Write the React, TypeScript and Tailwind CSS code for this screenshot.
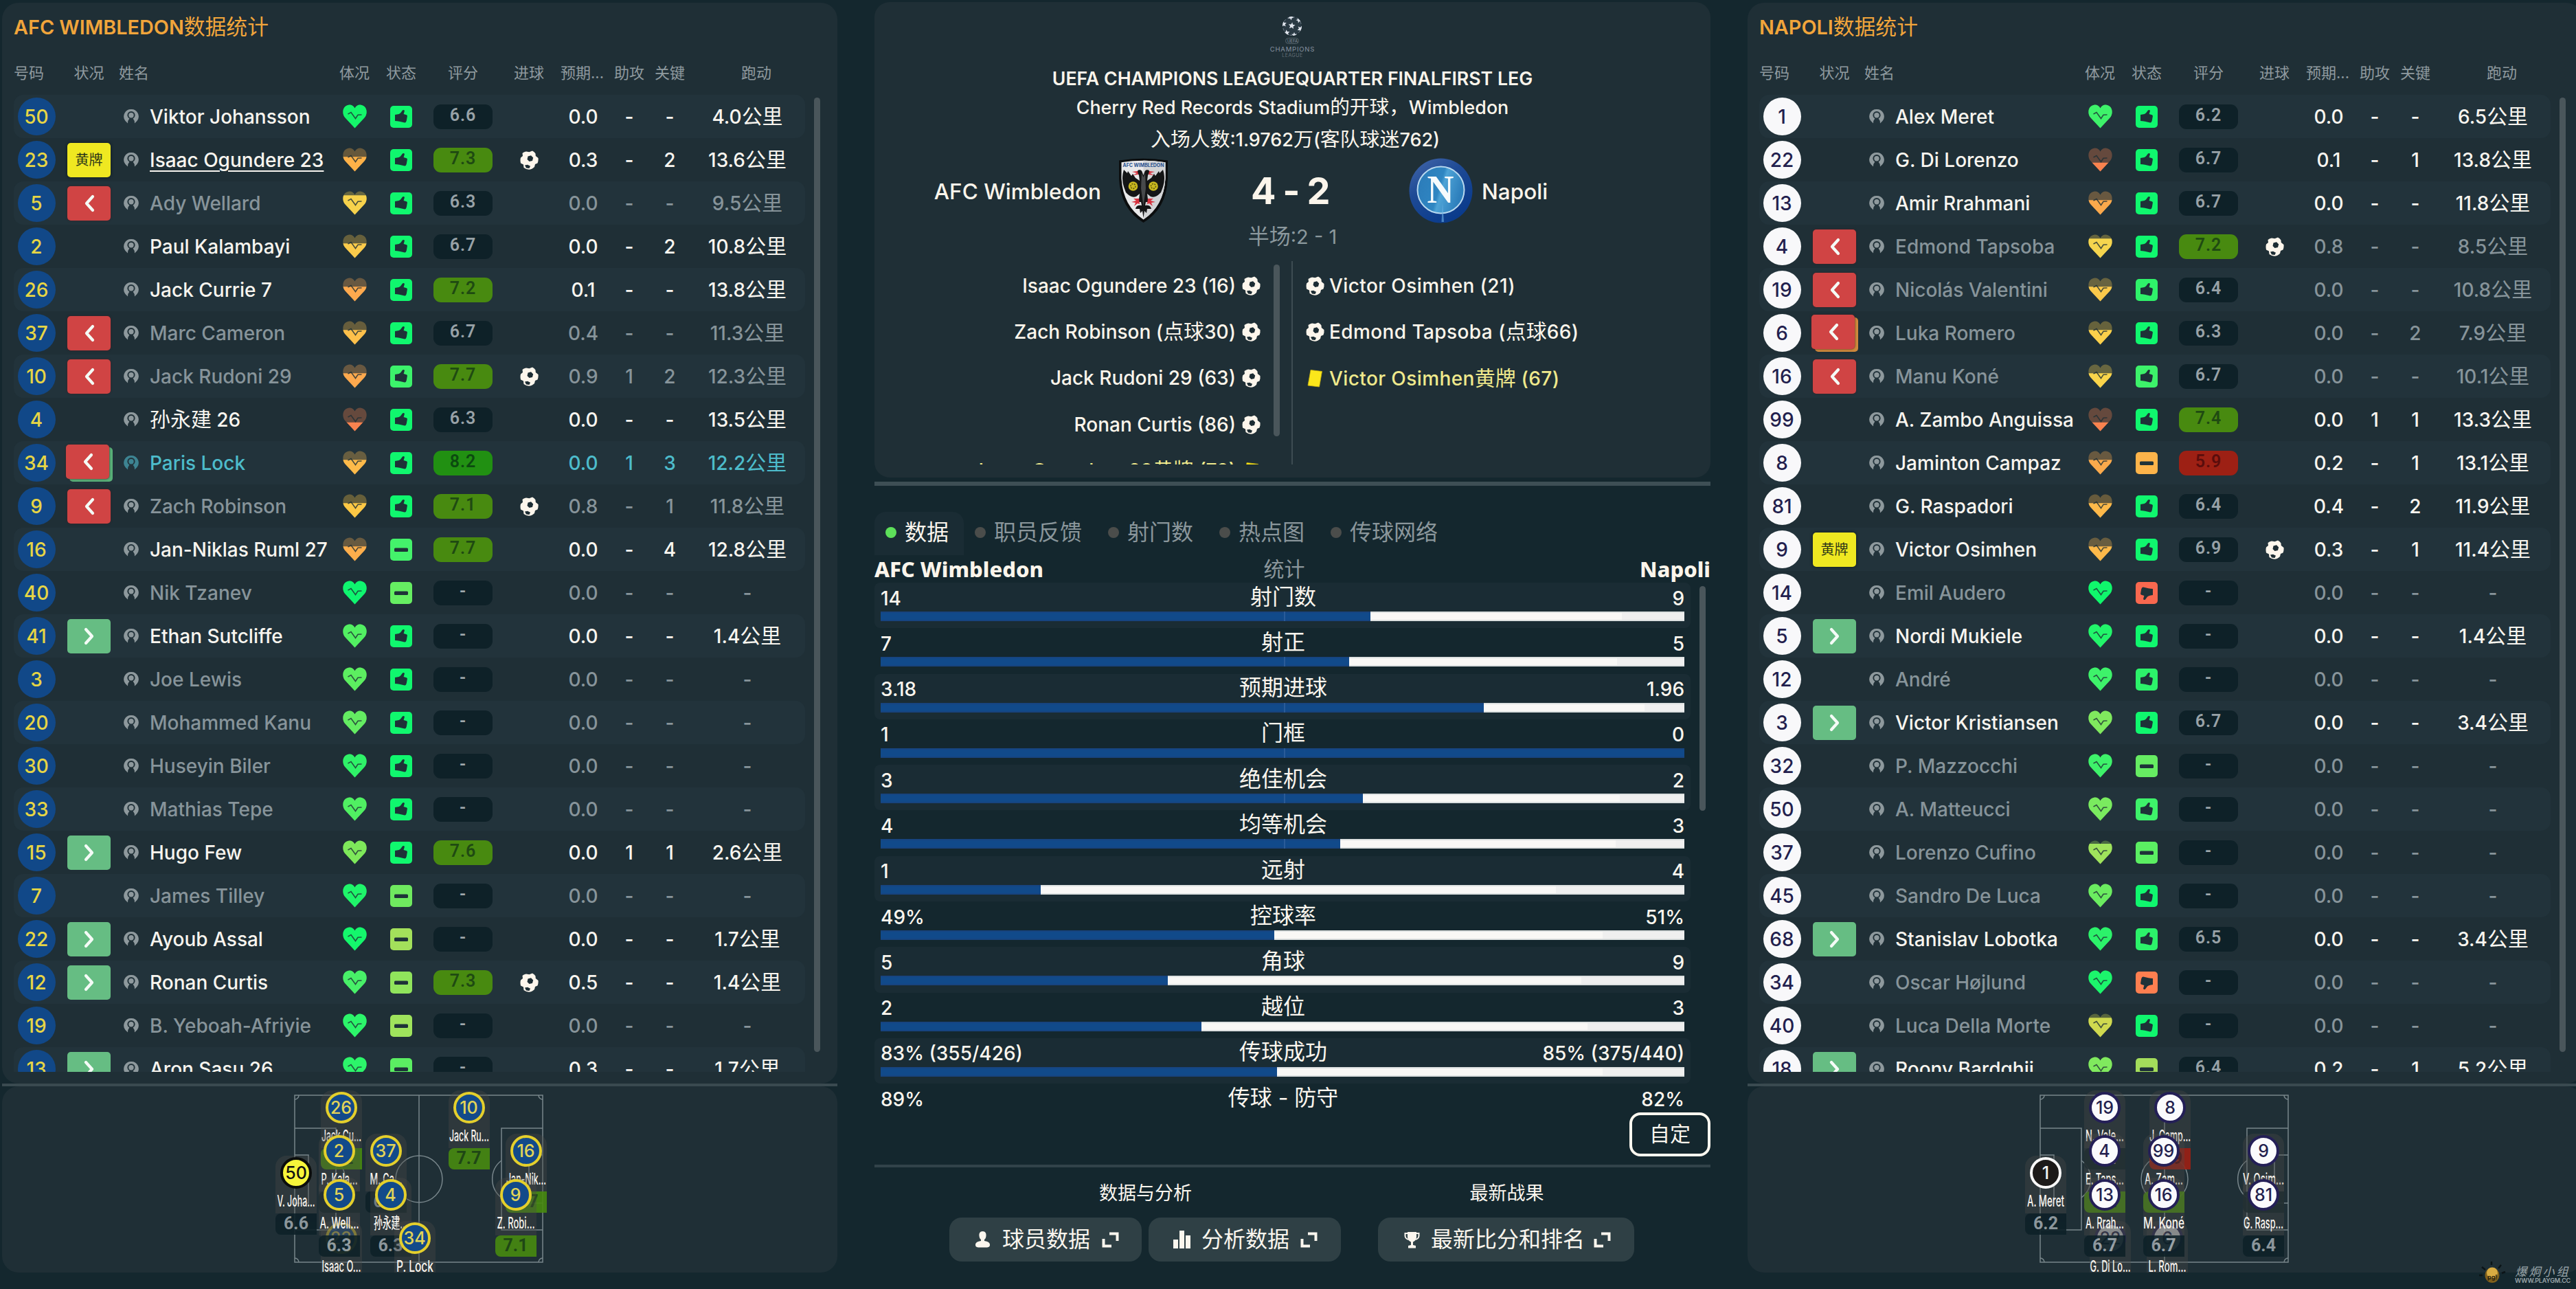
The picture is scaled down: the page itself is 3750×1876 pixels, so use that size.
import React from "react";

type Status = "card" | "out" | "in" | "outGreen" | "outOrange" | "";
type Mood = "up" | "flat" | "down";
type Player = {
  no: number;
  st: Status;
  name: string;
  heart: string;
  lost: number;
  mood: Mood;
  moodColor: string;
  rating: string;
  goal?: boolean;
  xg: string;
  ast: string;
  key: string;
  run: string;
  tone?: "dim" | "focus";
  underline?: boolean;
};

const G = "#10f76e";
const D = "-";

const home: Player[] = [
  { no: 50, st: "", name: "Viktor Johansson", heart: "#14f56a", lost: 0, mood: "up", moodColor: G, rating: "6.6", xg: "0.0", ast: D, key: D, run: "4.0公里" },
  { no: 23, st: "card", name: "Isaac Ogundere 23", heart: "#fdb148", lost: 38, mood: "up", moodColor: G, rating: "7.3", goal: true, xg: "0.3", ast: D, key: "2", run: "13.6公里", underline: true },
  { no: 5, st: "out", name: "Ady Wellard", heart: "#f6d24c", lost: 18, mood: "up", moodColor: G, rating: "6.3", xg: "0.0", ast: D, key: D, run: "9.5公里", tone: "dim" },
  { no: 2, st: "", name: "Paul Kalambayi", heart: "#fbcb4b", lost: 38, mood: "up", moodColor: G, rating: "6.7", xg: "0.0", ast: D, key: "2", run: "10.8公里" },
  { no: 26, st: "", name: "Jack Currie 7", heart: "#fda94e", lost: 38, mood: "up", moodColor: G, rating: "7.2", xg: "0.1", ast: D, key: D, run: "13.8公里" },
  { no: 37, st: "out", name: "Marc Cameron", heart: "#fdc04b", lost: 38, mood: "up", moodColor: G, rating: "6.7", xg: "0.4", ast: D, key: D, run: "11.3公里", tone: "dim" },
  { no: 10, st: "out", name: "Jack Rudoni 29", heart: "#fda94e", lost: 38, mood: "up", moodColor: "#3cf26b", rating: "7.7", goal: true, xg: "0.9", ast: "1", key: "2", run: "12.3公里", tone: "dim" },
  { no: 4, st: "", name: "孙永建 26", heart: "#f9834f", lost: 62, mood: "up", moodColor: G, rating: "6.3", xg: "0.0", ast: D, key: D, run: "13.5公里" },
  { no: 34, st: "outGreen", name: "Paris Lock", heart: "#fdba4a", lost: 38, mood: "up", moodColor: G, rating: "8.2", xg: "0.0", ast: "1", key: "3", run: "12.2公里", tone: "focus" },
  { no: 9, st: "out", name: "Zach Robinson", heart: "#fdc845", lost: 38, mood: "up", moodColor: G, rating: "7.1", goal: true, xg: "0.8", ast: D, key: "1", run: "11.8公里", tone: "dim" },
  { no: 16, st: "", name: "Jan-Niklas Ruml 27", heart: "#fdae4c", lost: 38, mood: "flat", moodColor: "#44f26b", rating: "7.7", xg: "0.0", ast: D, key: "4", run: "12.8公里" },
  { no: 40, st: "", name: "Nik Tzanev", heart: "#0ff56f", lost: 0, mood: "flat", moodColor: "#66ee62", rating: D, xg: "0.0", ast: D, key: D, run: D, tone: "dim" },
  { no: 41, st: "in", name: "Ethan Sutcliffe", heart: "#52f062", lost: 0, mood: "up", moodColor: G, rating: D, xg: "0.0", ast: D, key: D, run: "1.4公里" },
  { no: 3, st: "", name: "Joe Lewis", heart: "#5cee60", lost: 0, mood: "up", moodColor: G, rating: D, xg: "0.0", ast: D, key: D, run: D, tone: "dim" },
  { no: 20, st: "", name: "Mohammed Kanu", heart: "#64ec62", lost: 0, mood: "up", moodColor: G, rating: D, xg: "0.0", ast: D, key: D, run: D, tone: "dim" },
  { no: 30, st: "", name: "Huseyin Biler", heart: "#2ff268", lost: 0, mood: "up", moodColor: G, rating: D, xg: "0.0", ast: D, key: D, run: D, tone: "dim" },
  { no: 33, st: "", name: "Mathias Tepe", heart: "#50f062", lost: 0, mood: "up", moodColor: G, rating: D, xg: "0.0", ast: D, key: D, run: D, tone: "dim" },
  { no: 15, st: "in", name: "Hugo Few", heart: "#7ee85a", lost: 0, mood: "up", moodColor: G, rating: "7.6", xg: "0.0", ast: "1", key: "1", run: "2.6公里" },
  { no: 7, st: "", name: "James Tilley", heart: "#1ff56a", lost: 0, mood: "flat", moodColor: "#6fe95f", rating: D, xg: "0.0", ast: D, key: D, run: D, tone: "dim" },
  { no: 22, st: "in", name: "Ayoub Assal", heart: "#14f76c", lost: 0, mood: "flat", moodColor: "#a3e05b", rating: D, xg: "0.0", ast: D, key: D, run: "1.7公里" },
  { no: 12, st: "in", name: "Ronan Curtis", heart: "#48f068", lost: 0, mood: "flat", moodColor: "#90e45c", rating: "7.3", goal: true, xg: "0.5", ast: D, key: D, run: "1.4公里" },
  { no: 19, st: "", name: "B. Yeboah-Afriyie", heart: "#2cf56a", lost: 0, mood: "flat", moodColor: "#9fe35c", rating: D, xg: "0.0", ast: D, key: D, run: D, tone: "dim" },
  { no: 13, st: "in", name: "Aron Sasu 26", heart: "#2cf56a", lost: 0, mood: "flat", moodColor: "#5bee62", rating: D, xg: "0.3", ast: D, key: D, run: "1.7公里" },
];

const away: Player[] = [
  { no: 1, st: "", name: "Alex Meret", heart: "#3ef26a", lost: 0, mood: "up", moodColor: G, rating: "6.2", xg: "0.0", ast: D, key: D, run: "6.5公里" },
  { no: 22, st: "", name: "G. Di Lorenzo", heart: "#f9834f", lost: 62, mood: "up", moodColor: G, rating: "6.7", xg: "0.1", ast: D, key: "1", run: "13.8公里" },
  { no: 13, st: "", name: "Amir Rrahmani", heart: "#fba94c", lost: 38, mood: "up", moodColor: G, rating: "6.7", xg: "0.0", ast: D, key: D, run: "11.8公里" },
  { no: 4, st: "out", name: "Edmond Tapsoba", heart: "#f5d54e", lost: 18, mood: "up", moodColor: G, rating: "7.2", goal: true, xg: "0.8", ast: D, key: D, run: "8.5公里", tone: "dim" },
  { no: 19, st: "out", name: "Nicolás Valentini", heart: "#fbc94b", lost: 38, mood: "up", moodColor: "#2ff26a", rating: "6.4", xg: "0.0", ast: D, key: D, run: "10.8公里", tone: "dim" },
  { no: 6, st: "outOrange", name: "Luka Romero", heart: "#fbd04b", lost: 38, mood: "up", moodColor: G, rating: "6.3", xg: "0.0", ast: D, key: "2", run: "7.9公里", tone: "dim" },
  { no: 16, st: "out", name: "Manu Koné", heart: "#fbd54b", lost: 38, mood: "up", moodColor: "#3df26a", rating: "6.7", xg: "0.0", ast: D, key: D, run: "10.1公里", tone: "dim" },
  { no: 99, st: "", name: "A. Zambo Anguissa", heart: "#f9834f", lost: 62, mood: "up", moodColor: G, rating: "7.4", xg: "0.0", ast: "1", key: "1", run: "13.3公里" },
  { no: 8, st: "", name: "Jaminton Campaz", heart: "#fbaa4c", lost: 38, mood: "flat", moodColor: "#fdb44a", rating: "5.9", xg: "0.2", ast: D, key: "1", run: "13.1公里" },
  { no: 81, st: "", name: "G. Raspadori", heart: "#fdb94a", lost: 38, mood: "up", moodColor: G, rating: "6.4", xg: "0.4", ast: D, key: "2", run: "11.9公里" },
  { no: 9, st: "card", name: "Victor Osimhen", heart: "#fdb94a", lost: 38, mood: "up", moodColor: G, rating: "6.9", goal: true, xg: "0.3", ast: D, key: "1", run: "11.4公里" },
  { no: 14, st: "", name: "Emil Audero", heart: "#10f76c", lost: 0, mood: "down", moodColor: "#f9684f", rating: D, xg: "0.0", ast: D, key: D, run: D, tone: "dim" },
  { no: 5, st: "in", name: "Nordi Mukiele", heart: "#22f56a", lost: 0, mood: "up", moodColor: G, rating: D, xg: "0.0", ast: D, key: D, run: "1.4公里" },
  { no: 12, st: "", name: "André", heart: "#3ef26a", lost: 0, mood: "up", moodColor: "#2cf26a", rating: D, xg: "0.0", ast: D, key: D, run: D, tone: "dim" },
  { no: 3, st: "in", name: "Victor Kristiansen", heart: "#80e95e", lost: 0, mood: "up", moodColor: G, rating: "6.7", xg: "0.0", ast: D, key: D, run: "3.4公里" },
  { no: 32, st: "", name: "P. Mazzocchi", heart: "#3ef26a", lost: 0, mood: "flat", moodColor: "#66ec62", rating: D, xg: "0.0", ast: D, key: D, run: D, tone: "dim" },
  { no: 50, st: "", name: "A. Matteucci", heart: "#7aeb5f", lost: 0, mood: "up", moodColor: "#3ef26a", rating: D, xg: "0.0", ast: D, key: D, run: D, tone: "dim" },
  { no: 37, st: "", name: "Lorenzo Cufino", heart: "#9fe35c", lost: 14, mood: "flat", moodColor: "#5bee62", rating: D, xg: "0.0", ast: D, key: D, run: D, tone: "dim" },
  { no: 45, st: "", name: "Sandro De Luca", heart: "#6bec60", lost: 0, mood: "up", moodColor: G, rating: D, xg: "0.0", ast: D, key: D, run: D, tone: "dim" },
  { no: 68, st: "in", name: "Stanislav Lobotka", heart: "#2cf26a", lost: 0, mood: "up", moodColor: "#2cf26a", rating: "6.5", xg: "0.0", ast: D, key: D, run: "3.4公里" },
  { no: 34, st: "", name: "Oscar Højlund", heart: "#1cf56c", lost: 0, mood: "down", moodColor: "#fd7f50", rating: D, xg: "0.0", ast: D, key: D, run: D, tone: "dim" },
  { no: 40, st: "", name: "Luca Della Morte", heart: "#cfd94f", lost: 18, mood: "up", moodColor: G, rating: D, xg: "0.0", ast: D, key: D, run: D, tone: "dim" },
  { no: 18, st: "in", name: "Roony Bardghji", heart: "#80e95e", lost: 0, mood: "flat", moodColor: "#a3dd5b", rating: "6.4", xg: "0.2", ast: D, key: "1", run: "5.2公里" },
];

/* Chinese glyphs are set slightly larger than the Latin text around them. */
function Mix({ children }: { children: string }) {
  return (
    <>
      {children.split(/([\u3000-\u9fff\uff0c]+)/).map((part, i) =>
        i % 2 ? (
          <span key={i} className="text-[1.07em] font-normal tracking-normal">
            {part}
          </span>
        ) : (
          part
        ),
      )}
    </>
  );
}

function Heart({ color, lost, id }: { color: string; lost: number; id: string }) {
  const cut = (35 * lost) / 100;
  const d = "M17.5 34.5 L3.6 19.5 C-1 14.5 -0.5 6.5 3.5 3 C8 -1 14.5 -0.5 17.5 5.5 C20.5 -0.5 27 -1 31.5 3 C35.5 6.5 36 14.5 31.4 19.5 Z";
  return (
    <svg width="35" height="35" viewBox="0 0 35 35">
      <clipPath id={id}>
        <rect x="0" y={cut} width="35" height={35 - cut} />
      </clipPath>
      <path d={d} fill={color} opacity="0.32" />
      <path d={d} fill={color} clipPath={`url(#${id})`} />
      <path d="M7.5 14 L12 11.5 L18.5 20.5 L22 15.3 L27.5 15" fill="none" stroke="#1e2f36" strokeOpacity="0.8" strokeWidth="1.6" />
    </svg>
  );
}

function MoodIcon({ mood, color }: { mood: Mood; color: string }) {
  return (
    <svg width="32" height="32" viewBox="0 0 32 32">
      <rect width="32" height="32" rx="5" fill={color} />
      {mood === "flat" ? (
        <rect x="6" y="13.5" width="20" height="5.5" rx="1.5" fill="#1e3238" />
      ) : (
        <path
          transform={mood === "down" ? "rotate(180 16 16)" : undefined}
          d="M7 13 L10 12.6 Q13 12.4 15 10.4 L18 6.6 Q19.5 5.4 20.6 6.6 L20.9 7.6 L19.6 12 L23.8 13.3 Q25 13.8 24.9 15 L23.8 21.5 Q23 24.8 21 24.6 L13.5 22.8 Q10 22 7 22 Z"
          fill="#1e3238"
        />
      )}
    </svg>
  );
}

function Ball() {
  return (
    <svg width="27" height="28" viewBox="0 0 27 28">
      <path
        d="M9 1.5 L13.5 2.2 L18 0.5 Q21 2 22.5 4.5 L22.8 8 L26.5 11 Q27 15 25.5 18.5 L22 20 L21 24 Q17.5 27.5 13 27.7 Q9 27.5 5.5 25 L5 20.5 L1 18.5 Q0 14 1 10.5 L4 8 L3.5 4 Q6 2 9 1.5 Z"
        fill="#fdf6ec"
      />
      <path d="M11.5 8.5 L16 7.2 L19.2 10.5 L18 15 L13.5 16 L10.5 13 Z" fill="#1c2c33" />
      <path d="M7 21.5 L11 20.8 L15 22.8 L13.5 26 L9 25.5 Z" fill="#1c2c33" />
    </svg>
  );
}

function PersonIcon({ focus }: { focus: boolean }) {
  const c = focus ? "#3d8492" : "#8e999d";
  return (
    <svg width="24" height="23" viewBox="0 0 24 23">
      <path d="M12 1 A10.5 10.5 0 0 1 20.5 18 L17 21.4 Q17 17.2 14.6 14.6 A5.6 5.6 0 1 0 9.4 14.6 Q7 17.2 7 21.4 L3.5 18 A10.5 10.5 0 0 1 12 1 Z" fill={c} />
      <circle cx="12" cy="9.7" r="3.7" fill={c} />
    </svg>
  );
}

function Chevron({ dir }: { dir: "left" | "right" }) {
  return (
    <svg width="16" height="26" viewBox="0 0 16 26">
      <path
        d={dir === "left" ? "M13 3 L4 13 L13 23" : "M3 3 L12 13 L3 23"}
        fill="none"
        stroke="#f4fbf6"
        strokeWidth="4.2"
        strokeLinecap="round"
        strokeLinejoin="round"
      />
    </svg>
  );
}

function StatusBadge({ st }: { st: Status }) {
  if (st === "") return null;
  if (st === "card")
    return (
      <div className="flex h-[50px] w-[63px] items-center justify-center rounded-[5px] bg-[#efe821] text-[20px] font-normal text-[#2a3418] shadow-[0_0_4px_#0c181c]">
        黄牌
      </div>
    );
  if (st === "in")
    return (
      <div className="flex h-[50px] w-[63px] items-center justify-center rounded-[5px] bg-[#66bd83]">
        <Chevron dir="right" />
      </div>
    );
  const face = (
    <div className="flex h-[50px] w-[63px] items-center justify-center rounded-[5px] bg-[#d04444] shadow-[0_0_3px_#3d1f24]">
      <Chevron dir="left" />
    </div>
  );
  if (st === "out") return face;
  return (
    <div className={st === "outGreen" ? "mr-[4px] mb-[3px] h-[50px] w-[63px] rounded-[5px] bg-[#58b078] shadow-[5px_4px_0_0_#58b078]" : "mr-[4px] mb-[3px] h-[50px] w-[63px] rounded-[5px] bg-[#d0893c] shadow-[5px_4px_0_0_#d0893c]"}>
      {face}
    </div>
  );
}

function ratingClass(r: string) {
  if (r === D) return "bg-[#0e2128] text-[#a0a9ad]";
  const v = parseFloat(r);
  if (v < 6) return "bg-[#9d2014] text-[#5a0d0c]";
  if (v >= 8) return "bg-[#219012] text-[#0c4a10]";
  if (v >= 7) return "bg-[#488a10] text-[#1f4a12]";
  return "bg-[#0e2128] text-[#98a2a7]";
}

function Row({ p, i, side }: { p: Player; i: number; side: "home" | "away" }) {
  const tone = p.tone === "dim" ? "text-[#87949a]" : p.tone === "focus" ? "text-[#4dbccb]" : "text-[#f8f5ef]";
  return (
    <div className={`flex h-[63px] shrink-0 items-center rounded-[14px] ${i % 2 ? "" : "bg-[#22333b]"} ${tone}`}>
      <div className="flex w-[66px] justify-center">
        <div
          className={`flex h-[55px] w-[55px] items-center justify-center rounded-full pt-px ${side === "home" ? "bg-[#114888] text-[#e6d545]" : "bg-[#f8f8fa] text-[#231f4e]"}`}
        >
          {p.no}
        </div>
      </div>
      <div className="flex w-[87px] justify-center">
        <StatusBadge st={p.st} />
      </div>
      <div className="flex w-[315px] items-center gap-[15px] pl-[6px]">
        <PersonIcon focus={p.tone === "focus"} />
        <span className={`whitespace-nowrap ${p.underline ? "underline decoration-2 underline-offset-[5px]" : ""}`}>
          <Mix>{p.name}</Mix>
        </span>
      </div>
      <div className="flex w-[56px] justify-center">
        <Heart color={p.heart} lost={p.lost} id={`h-${side}-${p.no}`} />
      </div>
      <div className="flex w-[80px] justify-center">
        <MoodIcon mood={p.mood} color={p.moodColor} />
      </div>
      <div className="flex w-[100px] justify-center">
        <div className={`flex h-[36px] w-[86px] items-center justify-center rounded-[11px] pb-[4px] font-[Roboto] text-[25px] leading-none font-semibold tracking-[1px] ${ratingClass(p.rating)}`}>
          {p.rating}
        </div>
      </div>
      <div className="flex w-[92px] justify-center">{p.goal ? <Ball /> : null}</div>
      <div className="w-[66px] text-center">{p.xg}</div>
      <div className="w-[68px] text-center">{p.ast}</div>
      <div className="w-[50px] text-center">{p.key}</div>
      <div className="w-[172px] pl-[4px] text-center whitespace-nowrap">
        <Mix>{p.run}</Mix>
      </div>
    </div>
  );
}

type Pin = { no: string; x: number; y: number; name: string; len: number; rating?: string; faded?: boolean; gk?: boolean };

const homePins: Pin[] = [
  { no: "26", x: 68.5, y: 18, name: "Jack Cu…", len: 58, rating: "7.2" },
  { no: "10", x: 254.5, y: 18, name: "Jack Ru…", len: 58, rating: "7.7" },
  { no: "2", x: 65.5, y: 81, name: "P. Kala…", len: 53, rating: "6.7" },
  { no: "37", x: 133.5, y: 81, name: "M. Ca…", len: 47, rating: "6.7" },
  { no: "16", x: 337.5, y: 81, name: "Jan-Nik…", len: 58, rating: "7.7" },
  { no: "50", x: 3, y: 113, name: "V. Joha…", len: 55, rating: "6.6", gk: true },
  { no: "23", x: 68.5, y: 208, name: "Isaac O…", len: 57, faded: true },
  { no: "5", x: 65.5, y: 145, name: "A. Well…", len: 57, rating: "6.3" },
  { no: "4", x: 140.5, y: 145, name: "孙永建…", len: 50, rating: "6.3" },
  { no: "9", x: 322.5, y: 145, name: "Z. Robi…", len: 55, rating: "7.1" },
  { no: "34", x: 175.5, y: 208, name: "P. Lock", len: 54 },
];

const awayPins: Pin[] = [
  { no: "19", x: 95, y: 18, name: "N. Vale…", len: 56, rating: "6.4" },
  { no: "8", x: 190, y: 18, name: "J. Camp…", len: 60, rating: "5.9" },
  { no: "4", x: 94.5, y: 81, name: "E. Taps…", len: 56, rating: "7.2" },
  { no: "99", x: 180.5, y: 81, name: "A. Zam…", len: 56, rating: "7.4" },
  { no: "9", x: 326, y: 81, name: "V. Osim…", len: 60, rating: "6.9" },
  { no: "1", x: 9, y: 113, name: "A. Meret", len: 54, rating: "6.2", gk: true },
  { no: "22", x: 103, y: 208, name: "G. Di Lo…", len: 59, faded: true },
  { no: "6", x: 186, y: 208, name: "L. Rom…", len: 55, faded: true },
  { no: "13", x: 95, y: 145, name: "A. Rrah…", len: 56, rating: "6.7" },
  { no: "16", x: 180.5, y: 145, name: "M. Koné", len: 60, rating: "6.7" },
  { no: "81", x: 326, y: 145, name: "G. Rasp…", len: 58, rating: "6.4" },
];

function pinCircle(side: "home" | "away", gk?: boolean) {
  if (side === "home") return gk ? "border-[#0b0d0c] bg-[#f7f53a] text-[#111]" : "border-[#e4cf2c] bg-[#124a8a] text-[#e2d457]";
  return gk ? "border-[#f8f8f8] bg-[#1c1a19] text-[#f4f4f4]" : "border-[#241f57] bg-[#fafafc] text-[#231f4e]";
}

/* Tactical pitch: every pin sits on a free canvas at its player's position. */
function Pitch({ pins, side }: { pins: Pin[]; side: "home" | "away" }) {
  return (
    <div className="relative h-[244px] w-[363px]">
      <svg className="absolute inset-0" width="363" height="246" viewBox="0 0 363 246" fill="none" stroke="#78868b" strokeWidth="1.5">
        <rect x="1" y="1" width="361" height="243" />
        <path d="M182 1 V244 M1 49 H61 V197 H1 M1 88 H21 V158 H1 M362 49 H302 V197 H362 M362 88 H342 V158 H362" />
        <circle cx="182" cy="123" r="34" />
        <path d="M61 96 A34 34 0 0 1 61 150 M302 96 A34 34 0 0 0 302 150 M1 7 A6 6 0 0 0 7 1 M356 1 A6 6 0 0 0 362 7 M1 238 A6 6 0 0 1 7 244 M356 244 A6 6 0 0 1 362 238" />
      </svg>
      {pins.map((p) => (
        <div key={p.no} className="absolute w-[60px]" style={{ left: p.x - 30, top: p.y - 24 }}>
          <div className="flex h-[84px] flex-col items-center rounded-t-[16px] bg-[#4a4a48]/35 pt-[2px]">
            <div
              className={`flex h-[46px] w-[46px] shrink-0 items-center justify-center rounded-full border-[4px] text-[25px] leading-none font-medium ${pinCircle(side, p.gk)} ${p.faded ? "opacity-60" : ""}`}
            >
              {p.no}
            </div>
            <svg className="mt-[4px] shrink-0 overflow-visible" width="60" height="30" viewBox="0 0 60 30">
              <text x={30 - p.len / 2} y="22" textLength={p.len} lengthAdjust="spacingAndGlyphs" fill="#f8f4ee" fontSize="22.5" fontWeight="500">
                {p.name}
              </text>
            </svg>
          </div>
          {p.rating ? (
            <div className={`flex h-[31px] items-center justify-center rounded-l-[8px] pb-[3px] font-[Roboto] text-[25px] leading-none font-bold opacity-90 ${ratingClass(p.rating)}`}>{p.rating}</div>
          ) : null}
        </div>
      ))}
    </div>
  );
}

function TeamSide({ side, title, players, pins }: { side: "home" | "away"; title: string; players: Player[]; pins: Pin[] }) {
  return (
    <section className={`flex shrink-0 flex-col overflow-hidden pt-[4px] ${side === "home" ? "w-[1216px]" : "w-[1206px]"}`}>
      <div className="flex h-[1573px] w-[1216px] flex-col rounded-[24px] bg-[#1f2f36]">
        <h2 className="mt-[10px] h-[50px] pl-[17px] text-[28.8px] leading-[50px] font-semibold text-[#f1a53b]">
          <Mix>{title}</Mix>
        </h2>
        <div className="mt-[25px] flex h-[35px] items-center pl-[17px] text-[22px] text-[#8f9a9f]">
          <div className="w-[66px]">号码</div>
          <div className="w-[87px] text-center">状况</div>
          <div className="w-[315px]">姓名</div>
          <div className="w-[56px] text-center">体况</div>
          <div className="w-[80px] text-center">状态</div>
          <div className="w-[100px] text-center">评分</div>
          <div className="w-[92px] text-center">进球</div>
          <div className="w-[66px] whitespace-nowrap">预期...</div>
          <div className="w-[68px] text-center">助攻</div>
          <div className="w-[50px] text-center">关键</div>
          <div className="w-[172px] pl-[30px] text-center">跑动</div>
        </div>
        <div className="mt-[14px] flex h-[1422px] pl-[17px]">
          <div className="flex h-full w-[1152px] flex-col overflow-hidden text-[28px] leading-none font-medium">
            {players.map((p, i) => (
              <Row key={p.no} p={p} i={i} side={side} />
            ))}
          </div>
          <div className="mt-[4px] ml-[13px] h-[1389px] w-[9px] rounded-full bg-[#4a565b]" />
        </div>
      </div>
      <div className="h-[4px] w-[1216px] bg-[#3a4a50]" />
      <div className="h-[271px] w-[1216px] overflow-hidden rounded-[24px] bg-[#1f2f36] pt-[12px] pl-[425px]">
        <Pitch pins={pins} side={side} />
      </div>
    </section>
  );
}

function StarBall() {
  const star = (cx: number, cy: number, r: number, rot: number) => {
    const pts = Array.from({ length: 10 }, (_, k) => {
      const a = ((k * 36 - 90 + rot) * Math.PI) / 180;
      const q = k % 2 ? r * 0.45 : r;
      return `${(cx + q * Math.cos(a)).toFixed(1)},${(cy + q * Math.sin(a)).toFixed(1)}`;
    });
    return <polygon key={`${cx}-${cy}`} points={pts.join(" ")} />;
  };
  return (
    <svg width="30" height="30" viewBox="0 0 30 30">
      <clipPath id="starball">
        <circle cx="15" cy="15" r="14" />
      </clipPath>
      <circle cx="15" cy="15" r="13.5" fill="#2a3a44" stroke="#7f8b98" strokeWidth="0.8" strokeDasharray="4 3" />
      <g fill="#dfe4ec" clipPath="url(#starball)">
        {star(14.5, 14.5, 5.2, 8)}
        {star(13, 2, 4.5, 170)}
        {star(25, 6, 4.5, 50)}
        {star(27, 19, 4.8, 100)}
        {star(18, 28, 4.2, 0)}
        {star(7, 25, 4.8, 210)}
        {star(2.5, 12, 4.8, 280)}
      </g>
    </svg>
  );
}

function WimbledonCrest() {
  return (
    <svg width="73" height="95" viewBox="0 0 73 95">
      <path d="M1 3.500 Q36 -2 72 3.500 L72 30 Q70 74 36.500 94 Q3 74 1 30 Z" fill="#0b0d0e" />
      <path d="M4.500 6.200 Q36 1.500 68.500 6.200 L68.500 30 Q66 70 36.500 89.500 Q7 70 4.500 30 Z" fill="#e9e9ea" />
      <path d="M36.500 3.500 Q53 4 68.500 6.200 L68.500 30 Q66 70 36.500 89.500 Z" fill="#d3d4d6" />
      <text x="6.5" y="12.5" textLength="60" lengthAdjust="spacingAndGlyphs" fontSize="7" fontWeight="700" fill="#27518f">
        AFC WIMBLEDON
      </text>
      <path
        d="M8 17 L13 22 L14 19 L19 26 L21 23 L25 29 L31 33 L30 25 Q26 20 29 17.500 Q34 16 35 21 L36.500 25 L38 21 Q39 16 44 17.500 Q47 20 43 25 L42 33 L48 29 L52 23 L54 26 L59 19 L60 22 L65 17 Q69 30 65 42 L62 50 Q54 59 47 56 L42 52 L43 60 L47 64 L40 64 L39 69 Q47 68 48 74 L42 74 L41 80 L38 77 L36.500 87 L35 77 L32 80 L31 74 L25 74 Q26 68 34 69 L33 64 L26 64 L30 60 L31 52 L26 56 Q19 59 11 50 L8 42 Q4 30 8 17 Z"
        fill="#141516"
      />
      <path d="M34 22 L36.500 28 L39 22 L40 44 L36.500 70 L33 44 Z" fill="#47494b" />
      <circle cx="21.500" cy="41" r="6.800" fill="#c9b81f" />
      <circle cx="51" cy="41" r="6.800" fill="#c9b81f" />
      <circle cx="21.500" cy="41" r="3.500" fill="none" stroke="#5d560f" strokeDasharray="2 1.5" strokeWidth="1.5" />
      <circle cx="51" cy="41" r="3.500" fill="none" stroke="#5d560f" strokeDasharray="2 1.5" strokeWidth="1.5" />
      <path d="M28 19 L20 20 L27 22 L21 25 L29 24 Z M45 19 L53 20 L46 22 L52 25 L44 24 Z" fill="#d7333f" />
      <path d="M30 59 L22 59 L26 62 L19 64 L25 65 L23 70 L28 66 L31 67 Z M43 59 L51 59 L47 62 L54 64 L48 65 L50 70 L45 66 L42 67 Z" fill="#d7333f" />
    </svg>
  );
}

function NapoliCrest() {
  return (
    <svg width="93" height="95" viewBox="0 0 93 95">
      <defs>
        <linearGradient id="ring" x1="0" y1="0" x2="0.6" y2="1">
          <stop offset="0" stopColor="#4568ab" />
          <stop offset="0.45" stopColor="#1e4a95" />
          <stop offset="1" stopColor="#0a3b8c" />
        </linearGradient>
        <linearGradient id="core" x1="0" y1="0" x2="1" y2="0.3">
          <stop offset="0" stopColor="#2b7ab8" />
          <stop offset="0.55" stopColor="#2f86c2" />
          <stop offset="0.62" stopColor="#4ea3d6" />
          <stop offset="1" stopColor="#2d7fbc" />
        </linearGradient>
      </defs>
      <ellipse cx="46.5" cy="47.5" rx="46" ry="47" fill="url(#ring)" />
      <circle cx="46.5" cy="46.5" r="34" fill="url(#core)" stroke="#b9d9ef" strokeWidth="2" />
      <text x="46" y="65" textAnchor="middle" fontFamily="Liberation Serif, serif" fontWeight="700" fontSize="57" textLength="39" lengthAdjust="spacingAndGlyphs" fill="#f6fafc">
        N
      </text>
      <path d="M49 64 L47.5 93 L51 93 Z" fill="#6fb4e6" opacity="0.6" />
    </svg>
  );
}

function YellowCard() {
  return (
    <svg width="27" height="28" viewBox="0 0 27 28">
      <path d="M7 2.5 L23.5 4.5 L19.5 27 L3 25 Z" fill="#fbe71b" stroke="#c9b20f" strokeWidth="0.8" />
    </svg>
  );
}

const homeEvents: [string, boolean][] = [
  ["Isaac Ogundere 23 (16)", false],
  ["Zach Robinson (点球30)", false],
  ["Jack Rudoni 29 (63)", false],
  ["Ronan Curtis (86)", false],
  ["Isaac Ogundere 23黄牌 (73)", true],
];
const awayEvents: [string, boolean][] = [
  ["Victor Osimhen (21)", false],
  ["Edmond Tapsoba (点球66)", false],
  ["Victor Osimhen黄牌 (67)", true],
];

const stats: [string, string, string, number][] = [
  ["14", "射门数", "9", 60.9],
  ["7", "射正", "5", 58.3],
  ["3.18", "预期进球", "1.96", 75],
  ["1", "门框", "0", 100],
  ["3", "绝佳机会", "2", 60],
  ["4", "均等机会", "3", 57.2],
  ["1", "远射", "4", 19.9],
  ["49%", "控球率", "51%", 49],
  ["5", "角球", "9", 35.7],
  ["2", "越位", "3", 39.9],
  ["83% (355/426)", "传球成功", "85% (375/440)", 49.3],
];

function Popout() {
  return (
    <svg width="25" height="23" viewBox="0 0 25 23" fill="none" stroke="#fbf6ee" strokeWidth="4">
      <path d="M11 2.5 H22.5 V13" />
      <path d="M2.5 10 V20.5 H14" />
    </svg>
  );
}

const buttonClass = "flex h-[64px] items-center rounded-[18px] bg-[#2f4045] text-[32px] leading-none text-[#fbf6ee]";

function MatchCentre() {
  return (
    <section className="flex w-[1217px] shrink-0 flex-col pt-[3px]">
      <div className="flex h-[692px] flex-col items-center rounded-[22px] bg-[#1f2f36] text-[#fbf5eb]">
        <div className="mt-[20px] flex h-[64px] flex-col items-center leading-none text-[#8d98a2]">
          <StarBall />
          <div className="mt-[2px] flex h-[9px] w-[20px] items-center justify-center rounded-full border border-[#56646c] text-[6px]">UEFA</div>
          <div className="mt-[3px] text-[9.5px] tracking-[0.8px] text-[#8792a0]">CHAMPIONS</div>
          <div className="text-[7px] tracking-[0.5px] text-[#66727b]">LEAGUE</div>
        </div>
        <h1 className="mt-[10px] h-[34px] text-[26.7px] leading-[34px] font-semibold whitespace-nowrap">UEFA CHAMPIONS LEAGUEQUARTER FINALFIRST LEG</h1>
        <div className="mt-[5px] h-[40px] text-[26.8px] leading-[40px] font-medium whitespace-nowrap">
          <Mix>Cherry Red Records Stadium的开球，Wimbledon</Mix>
        </div>
        <div className="mt-[7px] ml-[8px] h-[40px] text-[27px] leading-[40px] font-medium whitespace-nowrap">
          <Mix>入场人数:1.9762万(客队球迷762)</Mix>
        </div>
        <div className="mt-[6px] flex h-[97px] w-full items-center">
          <div className="w-[330px] pt-[2px] text-right text-[31.5px] leading-none font-medium whitespace-nowrap">AFC Wimbledon</div>
          <div className="ml-[25px]">
            <WimbledonCrest />
          </div>
          <div className="w-[350px] pl-[4px] text-center text-[54px] leading-none font-bold tracking-[-1.5px] whitespace-nowrap">4 - 2</div>
          <NapoliCrest />
          <div className="ml-[13px] pt-[2px] text-[31.5px] leading-none font-medium">Napoli</div>
        </div>
        <div className="h-[36px] text-[29px] leading-[36px] text-[#8b989d]">
          <Mix>半场:2 - 1</Mix>
        </div>
        <div className="mt-[18px] flex h-[296px] w-full overflow-hidden text-[28px] leading-none font-medium">
          <div className="flex w-[562px] flex-col pt-[2px]">
            {homeEvents.map(([t, card]) => (
              <div key={t} className={`flex h-[67.4px] shrink-0 items-center justify-end gap-[9px] whitespace-nowrap ${card ? "text-[#efe98c]" : ""}`}>
                <span>
                  <Mix>{t}</Mix>
                </span>
                {card ? <YellowCard /> : <Ball />}
              </div>
            ))}
          </div>
          <div className="mt-[5px] ml-[19px] h-[250px] w-[9px] rounded-full bg-[#4a565b]" />
          <div className="ml-[17px] h-full w-[2px] bg-[#3d4c52]" />
          <div className="ml-[19px] flex flex-col pt-[2px] tracking-[0.4px]">
            {awayEvents.map(([t, card]) => (
              <div key={t} className={`flex h-[67.4px] shrink-0 items-center gap-[7px] whitespace-nowrap ${card ? "text-[#efe98c]" : ""}`}>
                {card ? <YellowCard /> : <Ball />}
                <span>
                  <Mix>{t}</Mix>
                </span>
              </div>
            ))}
          </div>
        </div>
      </div>
      <div className="mt-[6px] h-[6px] bg-[#3e4f55]" />
      <div className="mt-[38px] flex h-[63px] text-[32px] leading-none">
        {["数据", "职员反馈", "射门数", "热点图", "传球网络"].map((t, i) => (
          <div key={t} className={`flex items-center gap-[12px] pr-[22px] pb-[3px] pl-[16px] ${i ? "text-[#8a969b]" : "rounded-t-[16px] bg-[#1a2c34] text-[#fbf6ee]"}`}>
            <span className={`h-[16px] w-[16px] rounded-full ${i ? "bg-[#4b4d4b]" : "bg-[#5de05a]"}`} />
            {t}
          </div>
        ))}
      </div>
      <div className="flex h-[40px] items-center font-['Noto_Sans','Noto_Sans_CJK_SC',sans-serif] text-[31px] leading-none font-extrabold text-[#fbf5eb]">
        <div className="flex-1">AFC Wimbledon</div>
        <div className="pr-[24px] text-[30px] font-normal text-[#8a969b]">统计</div>
        <div className="flex-1 text-right">Napoli</div>
      </div>
      <div className="flex h-[770px]">
        <div className="w-[1188px]">
          {stats.map(([a, label, b, pct], i) => (
            <div key={label} className={`h-[66.3px] rounded-[8px] px-[9px] ${i % 2 ? "" : "bg-[#1a2c34]"}`}>
              <StatLine a={a} label={label} b={b} />
              <div className="relative flex h-[14px] bg-[#114a8a]">
                <div className="border-y-2 border-[#174480]" style={{ width: `${pct}%` }} />
                <div className="flex flex-1 justify-end border-y-2 border-[#dde1e1] bg-[#f9f8f6]">
                  <div className="h-full w-[20%] bg-[#efefef]" />
                </div>
                {pct > 50 ? <div className="absolute inset-y-0 left-[587px] w-[2px] bg-[#2a5b98]" /> : null}
              </div>
            </div>
          ))}
          <div className="px-[9px]">
            <StatLine a="89%" label="传球 - 防守" b="82%" />
          </div>
        </div>
        <div className="mt-[5px] ml-[13px] h-[327px] w-[9px] rounded-full bg-[#4a565b]" />
      </div>
      <div className="mt-[1px] ml-auto flex h-[64px] w-[118px] items-center justify-center rounded-[16px] border-[4px] border-[#fdf8f0] pb-[2px] text-[30px] leading-none text-[#fbf6ee]">自定</div>
      <div className="mt-[12px] h-[4px] bg-[#32434a]" />
      <div className="mt-[20px] flex text-[#fbf6ee]">
        <div className="ml-[109px] flex w-[570px] flex-col">
          <div className="pl-[1px] text-center text-[27px] leading-[36px]">数据与分析</div>
          <div className="mt-[17px] flex gap-[10px]">
            <div className={`${buttonClass} w-[280px] pl-[36px]`}>
              <svg width="25" height="24" viewBox="0 0 25 24" fill="#fbf6ee">
                <path d="M12.5 0 C16.5 0 18 3 17.5 7 Q17 11 15 12 L15 14 Q22.5 15 23 19 Q23.5 23 19 23.5 L6 23.5 Q1.5 23 2 19 Q2.5 15 10 14 L10 12 Q8 11 7.5 7 C7 3 8.5 0 12.5 0 Z" />
              </svg>
              <span className="mr-[17px] ml-[16px]">球员数据</span>
              <Popout />
            </div>
            <div className={`${buttonClass} w-[280px] pl-[35px]`}>
              <svg width="27" height="27" viewBox="0 0 27 27" fill="#fbf6ee">
                <path d="M1 13 H8 V26 H1 Z M10 0 H17 V26 H10 Z M19 7 H26 V26 H19 Z" />
              </svg>
              <span className="mr-[16px] ml-[15px]">分析数据</span>
              <Popout />
            </div>
          </div>
        </div>
        <div className="ml-[54px] flex w-[373px] flex-col">
          <div className="pl-[2px] text-center text-[27px] leading-[36px]">最新战果</div>
          <div className={`${buttonClass} mt-[17px] pl-[37px]`}>
            <svg width="25" height="25" viewBox="0 0 25 25" fill="#fbf6ee">
              <path d="M6 1 H19 V9 Q18 14 14 15.5 V20 L18 21 V24.5 H7 V21 L11 20 V15.5 Q7 14 6 9 Z" />
              <path d="M6 3 H2.5 V7 Q3 11 7.5 12 M19 3 H22.5 V7 Q22 11 17.5 12" fill="none" stroke="#fbf6ee" strokeWidth="2" />
            </svg>
            <span className="mr-[13px] ml-[15px]">最新比分和排名</span>
            <Popout />
          </div>
        </div>
      </div>
    </section>
  );
}

function StatLine({ a, label, b }: { a: string; label: string; b: string }) {
  return (
    <div className="flex h-[42px] items-center pt-[3px] text-[28px] leading-none font-medium text-[#fbf6ee]">
      <div className="flex-1">{a}</div>
      <div className="pb-[4px] pl-[2px] text-[32px] font-normal">{label}</div>
      <div className="flex-1 text-right">{b}</div>
    </div>
  );
}

function Watermark() {
  return (
    <div className="absolute right-[8px] bottom-[4px] flex items-center gap-[10px] text-[#9aa5a9]">
      <svg width="44" height="36" viewBox="0 0 44 36">
        <path d="M6 8 L11 12 M20 0 V5 M34 5 L30 10 M40 15 L35 17 M2 20 H7" stroke="#0b1417" strokeWidth="2.5" />
        <ellipse cx="21" cy="20" rx="10.5" ry="11" fill="#80601c" />
        <circle cx="21" cy="16.500" r="8" fill="#d9ac42" />
        <text x="14" y="26" fontSize="9" fontWeight="700" fill="#2a1f0c">
          pg!
        </text>
      </svg>
      <div className="flex flex-col items-center leading-none">
        <div className="font-['Noto_Sans_CJK_SC'] text-[17px] tracking-[3px] italic">爆炯小组</div>
        <div className="mt-[1px] text-[9px] font-semibold tracking-[-0.2px]">WWW.PLAYGM.CC</div>
      </div>
    </div>
  );
}

export default function App() {
  return (
    <div className="relative flex h-[1876px] w-[3750px] overflow-hidden bg-[#14272e] pl-[3px] font-['Inter','Noto_Sans_CJK_SC',sans-serif]">
      <TeamSide side="home" title="AFC WIMBLEDON数据统计" players={home} pins={homePins} />
      <div className="w-[54px] shrink-0" />
      <MatchCentre />
      <div className="w-[54px] shrink-0" />
      <TeamSide side="away" title="NAPOLI数据统计" players={away} pins={awayPins} />
      <Watermark />
    </div>
  );
}
